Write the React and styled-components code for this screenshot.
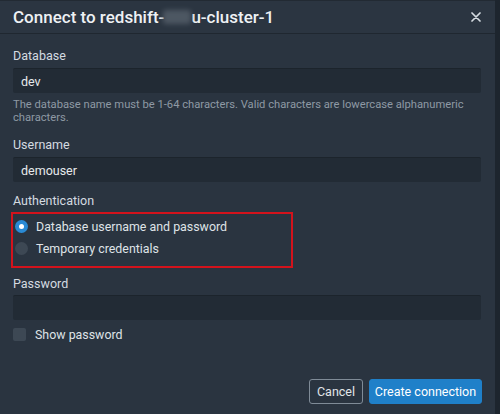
import React from "react";
import styled, { createGlobalStyle } from "styled-components";

const Global = createGlobalStyle`
  html, body { margin: 0; padding: 0; background: #1d252e; }
  body { font-family: Roboto, "Liberation Sans", Arial, sans-serif; }
  * { box-sizing: border-box; }
`;

const Dialog = styled.div`
  width: 495px;
  height: 414px;
  background: #2a3440;
  display: flex;
  flex-direction: column;
  color: #d5dbe1;
  border-top: 1px solid #222a33;
`;

const Header = styled.div`
  height: 33px;
  display: flex;
  align-items: center;
  justify-content: space-between;
  padding: 0 12px 0 13px;
  border-bottom: 1px solid #1f2730;
  background: #2b3541;
`;

const Title = styled.h2`
  margin: 0;
  font-size: 17px;
  font-weight: 500;
  color: #eef1f4;
  display: flex;
  align-items: center;
  white-space: nowrap;
`;

const Blurred = styled.span`
  display: inline-block;
  width: 28px;
  height: 14px;
  margin: 0 0 0 -1px;
  border-radius: 3px;
  filter: blur(2.5px);
  background: #56606b;
  opacity: 0.8;
`;

const Close = styled.button`
  background: none;
  border: none;
  padding: 0;
  width: 14px;
  height: 14px;
  display: flex;
  align-items: center;
  justify-content: center;
`;

const Body = styled.div`
  flex: 1;
  display: flex;
  flex-direction: column;
  padding: 14px 13px 0 13px;
`;

const Field = styled.div`
  display: flex;
  flex-direction: column;
  margin-bottom: ${(p) => p.$mb || 0}px;
`;

const Label = styled.label`
  font-size: 12.5px;
  line-height: 16px;
  color: #d5dbe1;
  margin-bottom: ${(p) => p.$mb ?? 4}px;
`;

const Input = styled.div`
  width: 468px;
  height: 25px;
  background: #222b35;
  border-radius: 2px;
  border-top: 1px solid #1c242c;
  padding: 0 8px;
  display: flex;
  align-items: center;
  font-size: 12.5px;
  color: #e6e9ec;
`;

const Help = styled.p`
  margin: 5px 0 0 0;
  font-size: 11.2px;
  line-height: 13px;
  color: #8e99a4;
  width: 468px;
`;

const Highlight = styled.div`
  margin-left: -2px;
  width: 282px;
  height: 56px;
  border: 2px solid #d3131c;
  display: flex;
  flex-direction: column;
  gap: 6px;
  padding: 4px 0 0 2px;
`;

const RadioRow = styled.div`
  display: flex;
  align-items: center;
  gap: 8px;
  height: 16px;
  font-size: 12.4px;
  color: #dfe3e7;
`;

const Radio = styled.span`
  width: 13px;
  height: 13px;
  border-radius: 50%;
  background: ${(p) => (p.$on ? "#2a8ad4" : "#3d4854")};
  display: flex;
  align-items: center;
  justify-content: center;
  &::after {
    content: "";
    width: 5px;
    height: 5px;
    border-radius: 50%;
    background: #ffffff;
    display: ${(p) => (p.$on ? "block" : "none")};
  }
`;

const CheckRow = styled.div`
  display: flex;
  align-items: center;
  gap: 9px;
  height: 16px;
  margin-top: 6px;
  font-size: 12.4px;
  color: #dfe3e7;
`;

const Checkbox = styled.span`
  width: 13px;
  height: 13px;
  border-radius: 2px;
  background: #3d4854;
`;

const Footer = styled.div`
  margin-top: auto;
  display: flex;
  justify-content: flex-end;
  gap: 6px;
  padding: 0 13px 10px 0;
`;

const Button = styled.button`
  height: 25px;
  padding: 0;
  font-family: inherit;
  font-size: 12.5px;
  white-space: nowrap;
  border-radius: 3px;
  border: 1px solid ${(p) => (p.$primary ? "#1f80c9" : "#7f8b97")};
  background: ${(p) => (p.$primary ? "#1f80c9" : "transparent")};
  color: ${(p) => (p.$primary ? "#ffffff" : "#e1e5e9")};
  width: ${(p) => p.$w}px;
`;

export default function App() {
  return (
    <>
      <Global />
      <Dialog>
        <Header>
          <Title>
            Connect to redshift-<Blurred />u-cluster-1
          </Title>
          <Close aria-label="Close">
            <svg width="10" height="10" viewBox="0 0 10 10">
              <path d="M1 1L9 9M9 1L1 9" stroke="#d5dbe1" strokeWidth="1.7" strokeLinecap="round" />
            </svg>
          </Close>
        </Header>
        <Body>
          <Field $mb={13}>
            <Label>Database</Label>
            <Input>dev</Input>
            <Help>
              The database name must be 1-64 characters. Valid characters are lowercase alphanumeric characters.
            </Help>
          </Field>
          <Field $mb={11}>
            <Label>Username</Label>
            <Input>demouser</Input>
          </Field>
          <Field $mb={8}>
            <Label $mb={3}>Authentication</Label>
            <Highlight>
              <RadioRow>
                <Radio $on />
                Database username and password
              </RadioRow>
              <RadioRow>
                <Radio />
                Temporary credentials
              </RadioRow>
            </Highlight>
          </Field>
          <Field>
            <Label $mb={3}>Password</Label>
            <Input />
            <CheckRow>
              <Checkbox />
              Show password
            </CheckRow>
          </Field>
        </Body>
        <Footer>
          <Button $w={54}>Cancel</Button>
          <Button $primary $w={113}>Create connection</Button>
        </Footer>
      </Dialog>
    </>
  );
}
